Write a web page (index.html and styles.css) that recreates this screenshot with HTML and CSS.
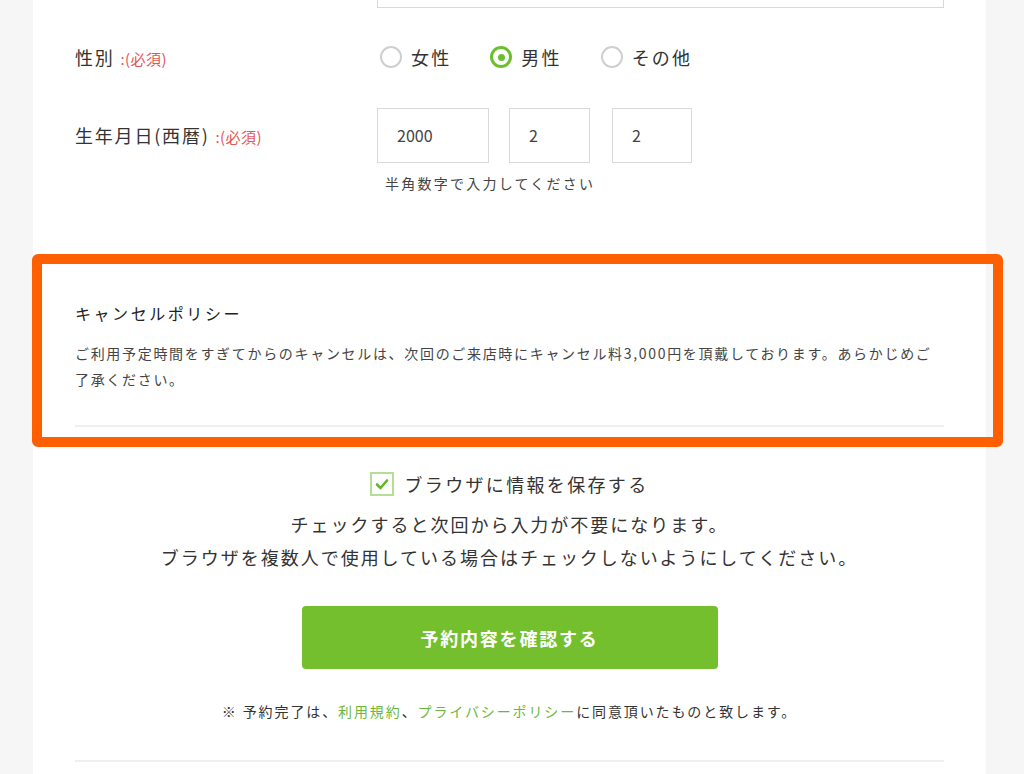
FILE: index.html
```html
<!DOCTYPE html>
<html lang="ja">
<head>
<meta charset="utf-8">
<title>予約フォーム</title>
<link rel="stylesheet" href="styles.css">
</head>
<body>
<div class="card">
  <div class="row row-top">
    <div></div>
    <div class="input-stub"></div>
  </div>

  <div class="row row-gender">
    <div class="label">性別 <span class="req">:(必須)</span></div>
    <div class="radios">
      <span class="radio"><span class="circle"></span>女性</span>
      <span class="radio"><span class="circle checked"></span>男性</span>
      <span class="radio"><span class="circle"></span>その他</span>
    </div>
  </div>

  <div class="row row-dob">
    <div class="label label-tall">生年月日(西暦) <span class="req">:(必須)</span></div>
    <div>
      <div class="dob-inputs">
        <div class="box box-y">2000</div>
        <div class="box box-m">2</div>
        <div class="box box-d">2</div>
      </div>
      <div class="hint">半角数字で入力してください</div>
    </div>
  </div>

  <div class="policy">
    <div class="policy-title">キャンセルポリシー</div>
    <p class="policy-body">ご利用予定時間をすぎてからのキャンセルは、次回のご来店時にキャンセル料3,000円を頂戴しております。あらかじめご了承ください。</p>
  </div>

  <div class="save">
    <span class="checkbox"><svg width="14" height="12" viewBox="0 0 14 12"><path d="M2 6.5 L5.5 10 L12 2.5" fill="none" stroke="#62b824" stroke-width="2.6" stroke-linecap="round" stroke-linejoin="round"/></svg></span>
    <span>ブラウザに情報を保存する</span>
  </div>
  <p class="save-note">チェックすると次回から入力が不要になります。<br>ブラウザを複数人で使用している場合はチェックしないようにしてください。</p>

  <div class="btn-wrap"><button class="btn" type="button">予約内容を確認する</button></div>

  <p class="agree">※ 予約完了は、<a href="#">利用規約</a>、<a href="#">プライバシーポリシー</a>に同意頂いたものと致します。</p>

  <div class="bottom-rule"></div>
</div>
<div class="highlight"></div>
</body>
</html>
```

FILE: styles.css
```css
html, body {
  margin: 0;
  padding: 0;
}
body {
  background: #f6f6f6;
  font-family: "Noto Sans CJK JP", "Noto Sans", sans-serif;
  color: #333;
  height: 774px;
  overflow: hidden;
  position: relative;
}
.card {
  margin-left: 33px;
  width: 953px;
  min-height: 774px;
  box-sizing: border-box;
  background: #fff;
  padding: 0 42px;
}
.row {
  display: grid;
  grid-template-columns: 302px 1fr;
}
.input-stub {
  height: 7px;
  border: 1px solid #d9d9d9;
  border-top: none;
}
.row-gender {
  margin-top: 34px;
}
.label {
  font-size: 18px;
  letter-spacing: 0.1em;
  line-height: 30px;
  color: #333;
}
.label-tall {
  line-height: 55px;
}
.req {
  font-size: 15px;
  color: #e35656;
  letter-spacing: 0.03em;
}
.radios {
  display: flex;
  align-items: center;
  height: 30px;
  font-size: 18px;
  letter-spacing: 0.12em;
}
.radio {
  display: flex;
  align-items: center;
  margin-right: 36px;
  margin-left: 3px;
}
.circle {
  width: 22px;
  height: 22px;
  box-sizing: border-box;
  border: 2px solid #cfcfcf;
  border-radius: 50%;
  margin-right: 9px;
  display: inline-flex;
  align-items: center;
  justify-content: center;
}
.circle.checked {
  border: 3.5px solid #6cbf2c;
}
.circle.checked::after {
  content: "";
  width: 7px;
  height: 7px;
  border-radius: 50%;
  background: #6cbf2c;
}
.row-dob {
  margin-top: 34px;
}
.dob-inputs {
  display: flex;
  gap: 20px;
}
.box {
  height: 55px;
  box-sizing: border-box;
  border: 1px solid #d9d9d9;
  font-size: 16px;
  line-height: 53px;
  padding-left: 19px;
  color: #444;
}
.box-y { width: 112px; }
.box-m { width: 81px; }
.box-d { width: 80px; margin-left: 2px; }
.hint {
  margin-top: 9px;
  padding-left: 8px;
  font-size: 14px;
  letter-spacing: 0.16em;
  line-height: 22px;
  color: #444;
}
.policy {
  margin-top: 106px;
  padding-bottom: 33px;
  border-bottom: 2px solid #efefef;
}
.policy-title {
  font-size: 16px;
  letter-spacing: 0.16em;
  line-height: 26px;
  color: #222;
}
.policy-body {
  margin: 14px 0 0;
  font-size: 14px;
  letter-spacing: 0.12em;
  line-height: 26px;
  color: #444;
}
.save {
  margin-top: 45px;
  display: flex;
  justify-content: center;
  align-items: center;
  font-size: 18px;
  letter-spacing: 0.13em;
  height: 24px;
  color: #333;
}
.checkbox {
  width: 24px;
  height: 24px;
  box-sizing: border-box;
  border: 2px solid #b5df95;
  display: inline-flex;
  align-items: center;
  justify-content: center;
  margin-right: 10px;
}
.save-note {
  margin: 12px 0 0;
  text-align: center;
  font-size: 18px;
  letter-spacing: 0.11em;
  line-height: 33px;
  color: #333;
}
.btn-wrap {
  margin-top: 32px;
  display: flex;
  justify-content: center;
}
.btn {
  width: 416px;
  height: 63px;
  border: none;
  border-radius: 4px;
  background: #74bf2e;
  color: #fff;
  font-family: inherit;
  font-size: 18px;
  font-weight: 700;
  letter-spacing: 0.1em;
  cursor: pointer;
}
.agree {
  margin: 32px 0 0;
  text-align: center;
  font-size: 14px;
  letter-spacing: 0.135em;
  line-height: 20px;
  color: #333;
}
.agree a {
  color: #6cb83a;
  text-decoration: none;
}
.bottom-rule {
  margin-top: 39px;
  border-top: 2px solid #efefef;
}
.highlight {
  position: absolute;
  left: 32px;
  top: 254px;
  width: 971px;
  height: 193px;
  box-sizing: border-box;
  border: 10px solid #ff5f00;
  border-radius: 6px;
  pointer-events: none;
}
```
